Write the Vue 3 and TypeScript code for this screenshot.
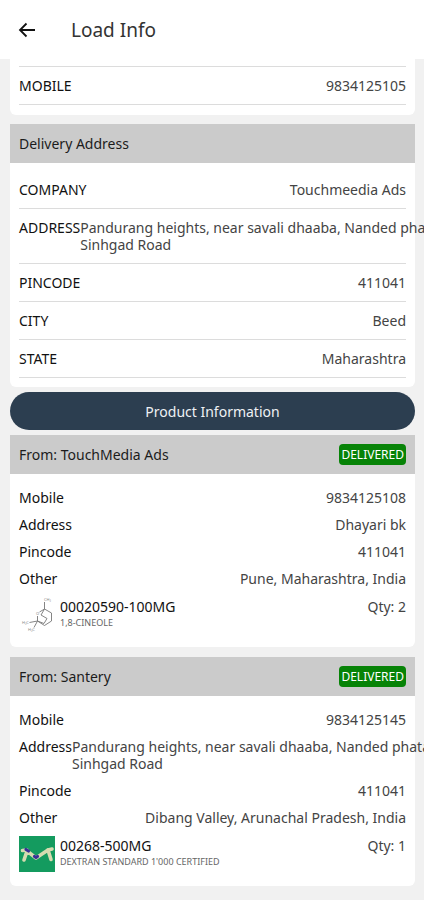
<script setup lang="ts">
interface Field {
  label: string
  value: string
}

interface Shipment {
  from: string
  status: string
  fields: Field[]
  code: string
  name: string
  quantity: number
  image: 'molecule' | 'brand'
}

const pickup: Field[] = [{ label: 'MOBILE', value: '9834125105' }]

const delivery: Field[] = [
  { label: 'COMPANY', value: 'Touchmeedia Ads' },
  { label: 'ADDRESS', value: 'Pandurang heights, near savali dhaaba, Nanded phata,\nSinhgad Road' },
  { label: 'PINCODE', value: '411041' },
  { label: 'CITY', value: 'Beed' },
  { label: 'STATE', value: 'Maharashtra' },
]

const shipments: Shipment[] = [
  {
    from: 'TouchMedia Ads',
    status: 'DELIVERED',
    fields: [
      { label: 'Mobile', value: '9834125108' },
      { label: 'Address', value: 'Dhayari bk' },
      { label: 'Pincode', value: '411041' },
      { label: 'Other', value: 'Pune, Maharashtra, India' },
    ],
    code: '00020590-100MG',
    name: '1,8-CINEOLE',
    quantity: 2,
    image: 'molecule',
  },
  {
    from: 'Santery',
    status: 'DELIVERED',
    fields: [
      { label: 'Mobile', value: '9834125145' },
      { label: 'Address', value: 'Pandurang heights, near savali dhaaba, Nanded phata,\nSinhgad Road' },
      { label: 'Pincode', value: '411041' },
      { label: 'Other', value: 'Dibang Valley, Arunachal Pradesh, India' },
    ],
    code: '00268-500MG',
    name: "DEXTRAN STANDARD 1'000 CERTIFIED",
    quantity: 1,
    image: 'brand',
  },
]
</script>

<template>
  <div class="page">
    <header class="app-bar">
      <button class="back" type="button" aria-label="Back">
        <svg viewBox="0 0 18 18" width="18" height="18" aria-hidden="true">
          <path d="M17 9H2M8.500 2.500L2 9l6.500 6.500" fill="none" stroke="#111" stroke-width="1.8" />
        </svg>
      </button>
      <h1>Load Info</h1>
    </header>

    <main class="content">
      <section class="card card-continued">
        <dl class="lined">
          <div v-for="field in pickup" :key="field.label" class="row">
            <dt>{{ field.label }}</dt>
            <dd>{{ field.value }}</dd>
          </div>
        </dl>
      </section>

      <section class="card card-delivery">
        <h2 class="card-head">Delivery Address</h2>
        <dl class="lined">
          <div v-for="field in delivery" :key="field.label" class="row">
            <dt>{{ field.label }}</dt>
            <dd>{{ field.value }}</dd>
          </div>
        </dl>
      </section>

      <button class="product-button" type="button">Product Information</button>

      <section v-for="shipment in shipments" :key="shipment.code" class="card card-shipment">
        <div class="card-head">
          <h2>From: {{ shipment.from }}</h2>
          <span class="badge">{{ shipment.status }}</span>
        </div>
        <div class="shipment-body">
          <dl class="plain">
            <div v-for="field in shipment.fields" :key="field.label" class="row">
              <dt>{{ field.label }}</dt>
              <dd>{{ field.value }}</dd>
            </div>
          </dl>
          <div class="product">
            <svg v-if="shipment.image === 'molecule'" class="thumb" viewBox="0 0 36 36" aria-hidden="true">
              <g fill="none" stroke="#777" stroke-width="0.9">
                <path d="M25.500 5v7l7 4v8l-7 4.500-7-4.500v-5M20.500 15l5-3" />
                <path d="M25.500 12l-3.500 6 6 3.500-3 5-6.500-2.500" />
                <path d="M18.500 24l-8 1.500M18.500 24l-3.500 6.500" />
              </g>
              <g class="atoms">
                <text x="25" y="4">CH₃</text>
                <text x="3" y="27">H₃C</text>
                <text x="9" y="34">H₃C</text>
                <text x="17" y="18">O</text>
              </g>
            </svg>
            <svg v-else class="thumb" viewBox="0 0 36 36" aria-hidden="true">
              <rect width="36" height="36" fill="#149b5f" />
              <g fill="none" stroke-linecap="round" stroke-linejoin="round">
                <path d="M5 24L8 15l9 7L29 14l3 9.500" stroke="#d5dbb0" stroke-width="3.6" />
                <path d="M3.500 14.500L8 14M33 13l-4 1" stroke="#d5dbb0" stroke-width="3.6" />
                <path d="M7 13.500l2.500 1.500M15.500 20.500l1.500 1 1.500-1" stroke="#3a2f96" stroke-width="3.2" />
              </g>
            </svg>
            <div class="product-text">
              <strong>{{ shipment.code }}</strong>
              <small>{{ shipment.name }}</small>
            </div>
            <span class="quantity">Qty: {{ shipment.quantity }}</span>
          </div>
        </div>
      </section>
    </main>
  </div>
</template>

<style>
body {
  background: #f1f1f1;
}
</style>

<style scoped>
.page {
  overflow-x: clip;
  min-height: 100vh;
  background: #f1f1f1;
  color: #444;
  font-family: "Noto Sans", "Open Sans", sans-serif;
  font-size: 14px;
  line-height: 17px;
}

h1,
h2,
dl,
dd {
  margin: 0;
  font-weight: 400;
}

h2 {
  font-size: 14px;
  line-height: 17px;
}

button {
  border: 0;
  font: inherit;
  cursor: pointer;
}

.app-bar {
  display: flex;
  align-items: center;
  gap: 35px;
  height: 59px;
  padding: 0 18px;
  box-sizing: border-box;
  background: #fff;
}

.back {
  display: flex;
  padding: 0;
  background: none;
}

h1 {
  color: #333;
  font-size: 19px;
  line-height: 28px;
}

.content {
  display: flex;
  flex-direction: column;
  padding: 0 9px 14px 10px;
}

.card {
  margin-bottom: 10px;
  border-radius: 0 0 6px 6px;
  background: #fff;
}

.card-continued {
  padding-top: 7px;
  margin-bottom: 9px;
}

.card-continued .lined {
  margin: 0 9px;
  padding: 0 0 10px;
  border-top: 1px solid #dcdcdc;
}

.card-delivery {
  margin-bottom: 5px;
}

.card-head {
  display: flex;
  align-items: center;
  justify-content: space-between;
  min-height: 39px;
  padding: 0 9px;
  background: #cbcbcb;
  color: #1c1c1c;
}

.lined {
  padding: 8px 9px 9px;
}

.row {
  display: flex;
  justify-content: space-between;
}

.lined .row {
  padding: 10px 0;
  border-bottom: 1px solid #dcdcdc;
}

dt {
  color: #111;
}

dd {
  white-space: pre;
}

.product-button {
  height: 38px;
  margin-bottom: 5px;
  border-radius: 19px;
  background: #2c3e50;
  color: #eef1f4;
}

.badge {
  padding: 2px;
  border-radius: 4px;
  background: #078307;
  color: #fff;
  font-size: 12px;
}

.shipment-body {
  display: flex;
  flex-direction: column;
  gap: 10px;
  padding: 15px 9px 14px;
}

.plain {
  display: flex;
  flex-direction: column;
  gap: 10px;
}

.product {
  display: flex;
  gap: 5px;
}

.thumb {
  flex: none;
  width: 36px;
  height: 36px;
}

.atoms {
  fill: #888;
  font-size: 4px;
}

.product-text {
  display: flex;
  flex: 1;
  flex-direction: column;
  padding-top: 1px;
}

strong {
  color: #111;
  font-weight: 400;
}

small {
  color: #666;
  font-size: 9px;
  line-height: 15px;
}

.quantity {
  padding-top: 1px;
}
</style>
